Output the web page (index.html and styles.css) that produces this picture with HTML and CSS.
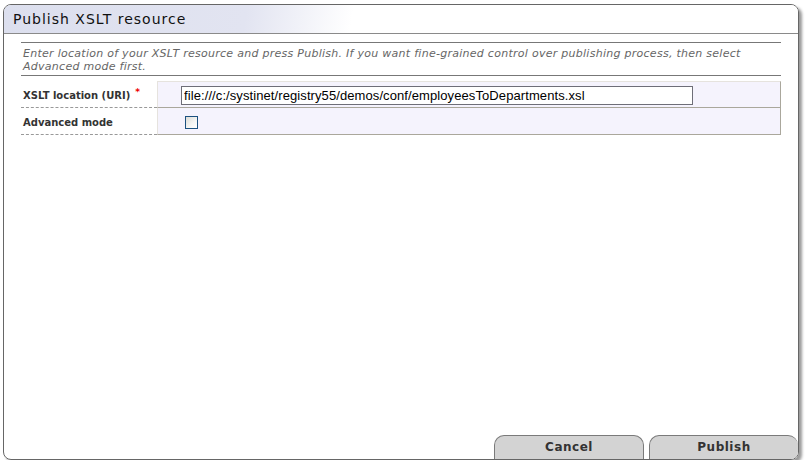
FILE: index.html
```html
<!DOCTYPE html>
<html>
<head>
<meta charset="utf-8">
<title>Publish XSLT resource</title>
<link rel="stylesheet" href="styles.css">
</head>
<body>
<div class="panel">
  <div class="header">Publish XSLT resource</div>
  <div class="content">
    <div class="desc">Enter location of your XSLT resource and press Publish. If you want fine-grained control over publishing process, then select Advanced mode first.</div>
    <div class="form">
      <div class="label">XSLT location (URI) <span class="req">*</span></div>
      <div class="value first"><input class="uri" type="text" value="file:///c:/systinet/registry55/demos/conf/employeesToDepartments.xsl"></div>
      <div class="label">Advanced mode</div>
      <div class="value last"><span class="check"></span></div>
    </div>
  </div>
  <div class="buttons">
    <div class="btn cancel">Cancel</div>
    <div class="btn publish">Publish</div>
  </div>
</div>
</body>
</html>
```
FILE: styles.css
```css
html, body {
  margin: 0;
  padding: 0;
  background: #fff;
}
body {
  font-family: "DejaVu Sans", Verdana, sans-serif;
}
.panel {
  margin: 4px 0 0 3px;
  width: 794px;
  height: 454px;
  border: 1px solid #666;
  border-radius: 8px;
  box-shadow: 3px 3px 3px rgba(0, 0, 0, 0.4);
  display: flex;
  flex-direction: column;
  overflow: hidden;
  box-sizing: content-box;
}
.header {
  height: 28px;
  border-bottom: 1px solid #8a8a8a;
  background: linear-gradient(100deg, #dcdfee 0, #e2e4f1 240px, #ffffff 345px);
  font-size: 14px;
  letter-spacing: 1px;
  color: #111;
  line-height: 29px;
  padding-left: 9px;
}
.content {
  padding: 0 17px;
  flex: 1;
}
.desc {
  margin-top: 8px;
  border-top: 1px solid #777;
  border-bottom: 1px solid #777;
  padding: 4px 2px 2px 2px;
  font-size: 11px;
  letter-spacing: 0.27px;
  line-height: 13px;
  font-style: italic;
  color: #666;
  height: 26px;
}
.form {
  margin-top: 5px;
  display: grid;
  grid-template-columns: 136px 1fr;
  grid-template-rows: 27px 27px;
}
.label {
  border-bottom: 1px dashed #999;
  padding-left: 2px;
  padding-top: 2px;
  font-size: 10px;
  font-weight: bold;
  color: #333;
  display: flex;
  align-items: center;
  box-sizing: border-box;
}
.req {
  color: #e00;
  font-size: 9px;
  margin-left: 5px;
  align-self: flex-start;
  margin-top: 4px;
}
.value {
  background: #f5f3fd;
  border-right: 1px solid #aaa79c;
  border-left: 1px solid #e6e3de;
  border-bottom: 1px solid #aaa79c;
  display: flex;
  align-items: center;
  box-sizing: border-box;
}
.value.first {
  border-top: 1px solid #e6e3de;
  padding-left: 23px;
}
.value.last {
  padding-left: 27px;
}
.uri {
  width: 512px;
  height: 19px;
  box-sizing: border-box;
  border: 1px solid #6e6e78;
  margin: 1px 0 0 0;
  padding: 0 2px;
  font-family: "Liberation Sans", Arial, sans-serif;
  font-size: 13px;
  letter-spacing: 0.09px;
  color: #000;
  background: #fff;
  outline: none;
}
.check {
  display: block;
  width: 13px;
  height: 13px;
  box-sizing: border-box;
  border: 1px solid #1c5180;
  background: linear-gradient(135deg, #dcdcd7 0, #f6f6f4 60%, #ffffff 100%);
  margin-top: 3px;
}
.buttons {
  display: flex;
  justify-content: flex-end;
  gap: 5px;
}
.btn {
  height: 24px;
  box-sizing: border-box;
  background: #d3d3d3;
  border: 1px solid #7a7a7a;
  border-bottom: none;
  border-radius: 10px 10px 0 0;
  font-size: 12px;
  font-weight: bold;
  letter-spacing: 0.5px;
  color: #333;
  text-align: center;
  line-height: 22px;
}
.cancel {
  width: 150px;
}
.publish {
  width: 149px;
  border-right: none;
}
```
